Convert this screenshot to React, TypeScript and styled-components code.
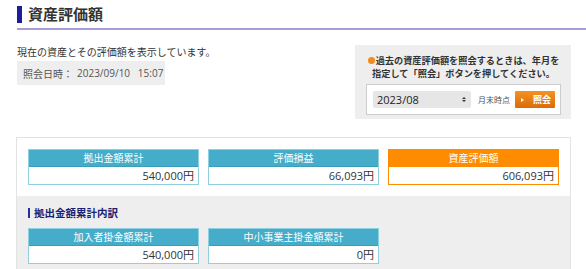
import React from "react";
import styled, { createGlobalStyle } from "styled-components";

const GlobalStyle = createGlobalStyle`
  body {
    margin: 0;
    background: #ffffff;
    font-family: "Open Sans", "Noto Sans CJK JP", sans-serif;
    color: #333333;
  }
`;

const Page = styled.div`
  width: 586px;
  padding: 5px 15px 0 16px;
  box-sizing: border-box;
  overflow: hidden;
`;

const Header = styled.header`
  margin: 0 -15px 0 1px;
  border-bottom: 2px solid #a99dd9;
  padding-bottom: 5px;
`;

const Title = styled.h1`
  margin: 0;
  height: 18px;
  display: flex;
  align-items: center;
  gap: 6px;
  font-size: 15px;
  line-height: 18px;
  font-weight: 700;
  color: #333333;
  &::before {
    content: "";
    width: 5px;
    height: 17px;
    background: #1c1c9c;
  }
`;

const TopRow = styled.section`
  display: flex;
  justify-content: space-between;
  align-items: flex-start;
  margin-top: 15px;
`;

const Intro = styled.div`
  display: flex;
  flex-direction: column;
  align-items: flex-start;
  padding-left: 1px;
`;

const Lead = styled.p`
  margin: 0;
  font-size: 10px;
  line-height: 14px;
  color: #333333;
`;

const DateBox = styled.div`
  margin-top: 2px;
  width: 148px;
  height: 24px;
  box-sizing: border-box;
  padding-left: 6px;
  display: flex;
  align-items: center;
  gap: 4px;
  background: #eeeeee;
  font-size: 10px;
  color: #555555;
`;

const SearchPanel = styled.aside`
  width: 216px;
  height: 74px;
  flex-shrink: 0;
  box-sizing: border-box;
  padding: 9px 10px 0 11px;
  background: #eeeeee;
`;

const Notice = styled.p`
  margin: 0 0 4px;
  font-size: 9.2px;
  line-height: 13px;
  font-weight: 700;
  color: #333333;
  text-align: center;
  white-space: nowrap;
`;

const Dot = styled.span`
  display: inline-block;
  width: 7px;
  height: 7px;
  border-radius: 50%;
  background: #f08c1a;
  margin-right: 1px;
`;

const SearchBox = styled.div`
  height: 31px;
  box-sizing: border-box;
  border: 1px solid #cccccc;
  background: #ffffff;
  display: flex;
  align-items: center;
  padding: 0 5px 0 6px;
`;

const MonthSelect = styled.div`
  width: 98px;
  height: 17px;
  box-sizing: border-box;
  border-radius: 2px;
  background: #e6e6e6;
  display: flex;
  align-items: center;
  justify-content: space-between;
  padding: 0 5px 0 4px;
  font-size: 11px;
  color: #222222;
`;

const Arrows = styled.span`
  display: flex;
  flex-direction: column;
  gap: 1px;
  &::before,
  &::after {
    content: "";
    border-left: 2px solid transparent;
    border-right: 2px solid transparent;
  }
  &::before {
    border-bottom: 2.5px solid #333;
  }
  &::after {
    border-top: 2.5px solid #333;
  }
`;

const Suffix = styled.span`
  margin-left: 7px;
  font-size: 8px;
  color: #555555;
`;

const SubmitButton = styled.button`
  margin-left: auto;
  width: 40px;
  height: 17px;
  border: none;
  border-radius: 1px;
  padding: 0 0 0 6px;
  display: flex;
  align-items: center;
  gap: 9px;
  background: linear-gradient(#f39224, #dc6a08);
  color: #ffffff;
  font-family: inherit;
  font-size: 9px;
  font-weight: 700;
  &::before {
    content: "";
    border-left: 3px solid #ffffff;
    border-top: 2px solid transparent;
    border-bottom: 2px solid transparent;
  }
`;

const ResultPanel = styled.section`
  margin-top: 18px;
  border: 1px solid #e3e3e3;
  border-bottom: none;
  width: 555px;
  box-sizing: border-box;
`;

const Totals = styled.div`
  background: #ffffff;
  padding: 11px 11px 11px;
  display: grid;
  grid-template-columns: repeat(3, 171px);
  gap: 9px;
`;

const Breakdown = styled.div`
  background: #eeeeee;
  padding: 11px 11px 12px;
`;

const SubTitle = styled.h2`
  margin: 0 0 9px;
  display: flex;
  align-items: center;
  gap: 4px;
  font-size: 10.5px;
  line-height: 12px;
  font-weight: 700;
  color: #1a2070;
  &::before {
    content: "";
    width: 2px;
    height: 10px;
    background: #2230a0;
  }
`;

const CardRow = styled.div`
  display: grid;
  grid-template-columns: repeat(2, 171px);
  gap: 9px;
`;

const Card = styled.div<{ $accent?: boolean }>`
  border: 1px solid ${(p) => (p.$accent ? "#ff8c00" : "#8fcfe0")};
  background: #ffffff;
`;

const CardHead = styled.div<{ $accent?: boolean }>`
  height: 16px;
  line-height: 16px;
  background: ${(p) => (p.$accent ? "#ff8c00" : "#45adc9")};
  border-bottom: 1px solid ${(p) => (p.$accent ? "#ff8c00" : "#3a9dbb")};
  color: #ffffff;
  font-size: 10px;
  text-align: center;
`;

const CardValue = styled.div`
  height: 17px;
  line-height: 17px;
  padding-right: 4px;
  text-align: right;
  font-size: 11px;
  color: #333333;
`;

interface Amount {
  label: string;
  value: string;
  accent?: boolean;
}

const totals: Amount[] = [
  { label: "拠出金額累計", value: "540,000円" },
  { label: "評価損益", value: "66,093円" },
  { label: "資産評価額", value: "606,093円", accent: true },
];

const breakdown: Amount[] = [
  { label: "加入者掛金額累計", value: "540,000円" },
  { label: "中小事業主掛金額累計", value: "0円" },
];

function AmountCard({ label, value, accent }: Amount) {
  return (
    <Card $accent={accent}>
      <CardHead $accent={accent}>{label}</CardHead>
      <CardValue>{value}</CardValue>
    </Card>
  );
}

export default function App() {
  return (
    <Page>
      <GlobalStyle />
      <Header>
        <Title>資産評価額</Title>
      </Header>
      <TopRow>
        <Intro>
          <Lead>現在の資産とその評価額を表示しています。</Lead>
          <DateBox>
            <span>照会日時：</span>
            <span>2023/09/10&nbsp;&nbsp;&nbsp;15:07</span>
          </DateBox>
        </Intro>
        <SearchPanel>
          <Notice>
            <Dot />
            過去の資産評価額を照会するときは、年月を
            <br />
            指定して「照会」ボタンを押してください。
          </Notice>
          <SearchBox>
            <MonthSelect>
              <span>2023/08</span>
              <Arrows />
            </MonthSelect>
            <Suffix>月末時点</Suffix>
            <SubmitButton>照会</SubmitButton>
          </SearchBox>
        </SearchPanel>
      </TopRow>
      <ResultPanel>
        <Totals>
          {totals.map((t) => (
            <AmountCard key={t.label} {...t} />
          ))}
        </Totals>
        <Breakdown>
          <SubTitle>拠出金額累計内訳</SubTitle>
          <CardRow>
            {breakdown.map((b) => (
              <AmountCard key={b.label} {...b} />
            ))}
          </CardRow>
        </Breakdown>
      </ResultPanel>
    </Page>
  );
}
